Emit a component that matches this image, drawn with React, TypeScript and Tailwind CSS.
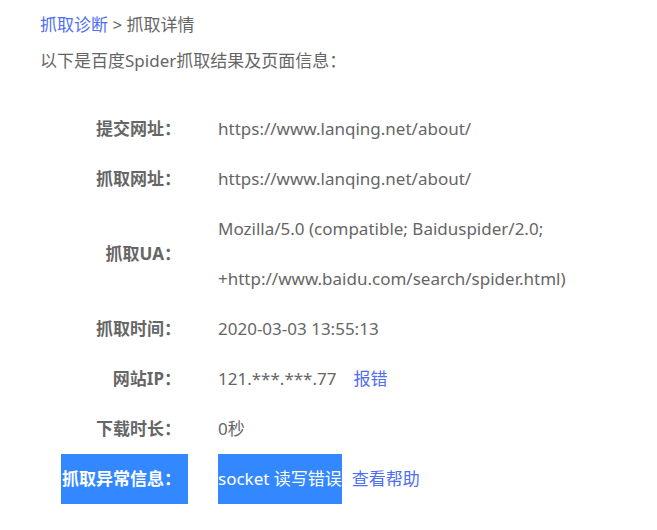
import React from "react";

const font = { fontFamily: '"Noto Sans", "Noto Sans CJK SC", sans-serif' };

type Row = { label: string; value: React.ReactNode; error?: boolean };

const rows: Row[] = [
  { label: "提交网址：", value: "https://www.lanqing.net/about/" },
  { label: "抓取网址：", value: "https://www.lanqing.net/about/" },
  {
    label: "抓取UA：",
    value: (
      <>
        Mozilla/5.0 (compatible; Baiduspider/2.0;
        <br />
        +http://www.baidu.com/search/spider.html)
      </>
    ),
  },
  { label: "抓取时间：", value: "2020-03-03 13:55:13" },
  {
    label: "网站IP：",
    value: (
      <>
        121.***.***.77
        <a className="ml-[17px] text-[#4e6ef2]">报错</a>
      </>
    ),
  },
  { label: "下载时长：", value: "0秒" },
  {
    label: "抓取异常信息：",
    error: true,
    value: (
      <>
        <span className="inline-block bg-[#3388ff] text-white">socket 读写错误</span>
        <a className="ml-[10px] text-[#4e6ef2]">查看帮助</a>
      </>
    ),
  },
];

export default function App() {
  return (
    <div className="bg-white text-[17px] text-[#666]" style={font}>
      <div className="pl-[40px] pt-[12px]">
        <div className="leading-[26px]">
          <a className="text-[#4e6ef2]">抓取诊断</a> &gt; 抓取详情
        </div>
        <div className="mt-[10px] leading-[26px]">以下是百度Spider抓取结果及页面信息：</div>
      </div>

      <div className="ml-[61px] mt-[30px] flex flex-col">
        {rows.map((r, i) => (
          <div key={i} className="flex items-center">
            <div
              className={
                r.error
                  ? "w-[127px] shrink-0 bg-[#3388ff] pr-[7px] text-right font-bold leading-[50px] text-white whitespace-nowrap"
                  : "w-[127px] shrink-0 pr-[7px] text-right font-bold leading-[50px] whitespace-nowrap"
              }
            >
              {r.label}
            </div>
            <div className="pl-[30px] leading-[50px] whitespace-nowrap">{r.value}</div>
          </div>
        ))}
      </div>
    </div>
  );
}
